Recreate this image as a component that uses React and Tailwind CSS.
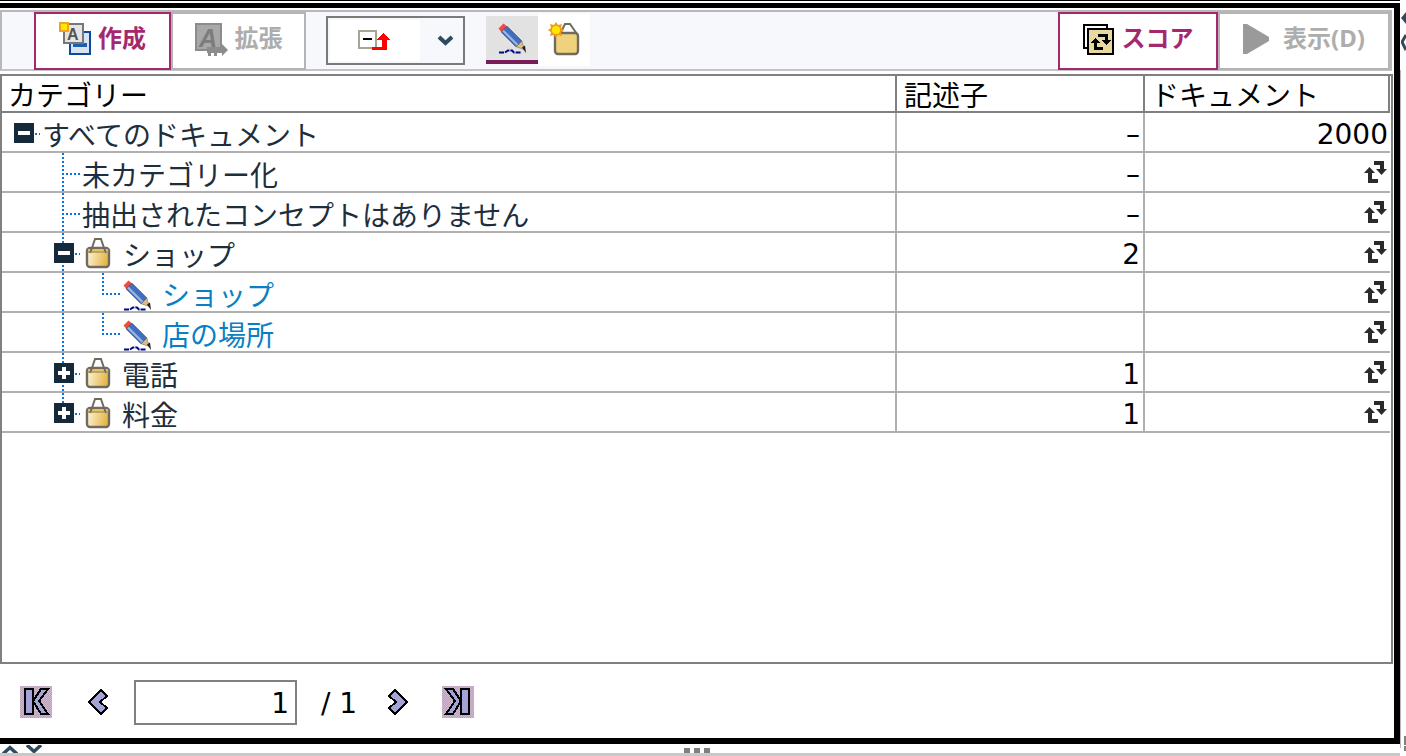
import React from "react";

const FONT = { fontFamily: '"DejaVu Sans","Noto Sans CJK JP",sans-serif' };

function Bag() {
  return (
    <svg width="26" height="32" viewBox="0 0 26 32" className="block">
      <defs>
        <linearGradient id="bagFill" x1="0" x2="1" y1="0" y2="0.2">
          <stop offset="0" stopColor="#fdf8e4" />
          <stop offset="1" stopColor="#e6b647" />
        </linearGradient>
      </defs>
      <rect x="2" y="11" width="22" height="19" rx="3" fill="url(#bagFill)" stroke="#6f6b60" strokeWidth="2.4" />
      <rect x="3" y="12" width="20" height="4" fill="#e9c25b" />
      <path d="M5 16 L7 11 L10 2 H16 L19 11 L21 16" fill="none" stroke="#6f6b60" strokeWidth="2" />
      <path d="M2 15 H24" stroke="#8a8570" strokeWidth="1" />
    </svg>
  );
}

function Pencil() {
  return (
    <svg width="30" height="32" viewBox="0 0 30 32" className="block">
      <path d="M4.2 9.8 L9.8 4.2 L24.8 19.2 L19.2 24.8 Z" fill="#3e6fc4" stroke="#27467f" strokeWidth="1" />
      <path d="M6 8.5 L20.5 23" stroke="#9fb7dd" strokeWidth="2.2" />
      <path d="M1.5 6.5 L6.5 1.5 L9.8 4.2 L4.2 9.8 Z" fill="#ef4a3c" />
      <path d="M19.2 24.8 L24.8 19.2 L27.5 27.5 Z" fill="#d9bd8d" stroke="#7d6d50" strokeWidth="0.6" />
      <path d="M25 25.5 L28 23.5 L29 31 Z" fill="#222" />
      <path d="M2 30.5 H8 L11 28.5 H15 L17 30.5 H24" stroke="#000a80" strokeWidth="2" fill="none" strokeDasharray="5 1" />
    </svg>
  );
}

function TreeBox({ plus }) {
  return (
    <span className="relative flex h-5 w-5 shrink-0 items-center justify-center bg-[#14293a]">
      <span className="h-1 w-3 bg-white" />
      {plus && <span className="absolute h-3 w-1 bg-white" />}
    </span>
  );
}

function Refresh() {
  return (
    <svg width="24" height="24" viewBox="0 0 24 24" fill="none" stroke="#2b2b2b" strokeWidth="4" className="block">
      <path d="M10 3 H18 V10" />
      <path d="M12 9 H23 L17.5 15 Z" fill="#2b2b2b" stroke="none" />
      <path d="M0 13 H11 L5.5 7 Z" fill="#2b2b2b" stroke="none" />
      <path d="M6 12 V21 H14" />
    </svg>
  );
}

const V = ({ x, h = "h-full" }) => (
  <span
    className={`absolute top-0 w-[2px] ${h} bg-[repeating-linear-gradient(to_bottom,#0b74e0_0_2px,transparent_2px_4px)]`}
    style={{ left: x }}
  />
);
const H = ({ x, w, y }) => (
  <span
    className="absolute h-[2px] bg-[repeating-linear-gradient(to_right,#0b74e0_0_2px,transparent_2px_4px)]"
    style={{ left: x, width: w, top: y }}
  />
);

const GRID = "grid h-10 w-[1388px] grid-cols-[893px_248px_247px] border-b-2 border-[#b0b0b0]";

function Row({ guides, indent, children, desc, doc, blue }) {
  return (
    <div className={GRID}>
      <div className={`relative flex items-center ${blue ? "text-[#0a7fc4]" : "text-[#1d2e3c]"}`} style={{ paddingLeft: indent }}>
        {guides}
        <span className="pt-[9px]">{children}</span>
      </div>
      <div className="flex items-center justify-end border-l-2 border-[#b0b0b0] pr-[3px] text-black">
        <span className="pt-[5px]">{desc}</span>
      </div>
      <div className="flex items-center justify-end border-l-2 border-[#b0b0b0] pr-[2px] text-black">
        {doc ? <span className="pt-[5px]">{doc}</span> : <Refresh />}
      </div>
    </div>
  );
}

function ToolButton({ active, label, icon, width, gap = "gap-[6px]" }) {
  return (
    <div
      className={`flex h-[58px] items-center justify-center ${gap} border-2 bg-white text-[24px] font-bold ${
        active ? "border-[#a5286e] text-[#a5286e]" : "border-[#b4b4b4] text-[#adadad]"
      } ${width}`}
      style={{ fontFamily: '"Noto Sans","Noto Sans CJK JP",sans-serif' }}
    >
      {icon}
      <span className="mb-[6px] leading-none">{label}</span>
    </div>
  );
}

function CreateIcon() {
  return (
    <svg width="33" height="34" viewBox="0 0 33 34" shapeRendering="crispEdges" className="mb-[4px] block">
      <rect x="11" y="10" width="20" height="22" fill="#d9e4f2" stroke="#0c4a9e" strokeWidth="2.4" />
      <rect x="14" y="21" width="14" height="4" fill="#1c5fb0" />
      <rect x="5" y="2" width="19" height="19" fill="#e4e4e4" stroke="#777" strokeWidth="2.4" />
      <text x="8" y="18" fontSize="16" fontWeight="700" fontFamily="Liberation Sans" fill="#555">A</text>
      <rect x="0" y="0" width="10" height="10" fill="#f6a11c" />
      <rect x="2" y="2" width="6" height="6" fill="#ffe800" />
    </svg>
  );
}
function ExtendIcon() {
  return (
    <svg width="33" height="33" viewBox="0 0 33 33" className="mb-[4px] block">
      <rect x="1" y="1" width="25" height="26" fill="#a8a8a8" stroke="#8c8c8c" strokeWidth="2" />
      <text x="4" y="24" fontSize="25" fontStyle="italic" fontWeight="700" fontFamily="Liberation Sans" fill="#7c7c7c">A</text>
      <rect x="12" y="24" width="17" height="6" fill="#8c8c8c" />
      <rect x="13" y="30" width="3" height="3" fill="#8c8c8c" />
      <rect x="19" y="30" width="3" height="3" fill="#8c8c8c" />
      <path d="M27 21 L33 27 L27 33 Z" fill="#8c8c8c" />
    </svg>
  );
}
function ScoreIcon() {
  return (
    <svg width="31" height="31" viewBox="0 0 31 31" shapeRendering="crispEdges" className="mb-[4px] block">
      <rect x="1" y="1" width="23" height="23" fill="#fff" stroke="#000" strokeWidth="2" />
      <rect x="5" y="5" width="25" height="25" fill="#e8d9a0" stroke="#000" strokeWidth="2" />
      <path d="M15 11 H23 V16 M12 19 V24 H20" stroke="#000" strokeWidth="3" fill="none" />
      <path d="M18 16 H28 L23 21 Z M7 19 H17 L12 14 Z" fill="#000" />
    </svg>
  );
}
function PlayIcon() {
  return (
    <svg width="26" height="30" viewBox="0 0 26 30" className="mb-[4px] block">
      <path d="M0 0 L4 0 L26 13 V17 L4 30 L0 30 Z" fill="#9a9a9a" />
    </svg>
  );
}

function NavIcon({ kind }) {
  const edge = kind === "first" || kind === "last";
  const flip = kind === "last" || kind === "next";
  const id = `dith-${kind}`;
  if (!edge) {
    return (
      <svg width="20" height="26" viewBox="0 0 20 26" shapeRendering="crispEdges" className="block">
        <g transform={flip ? "matrix(-1 0 0 1 20 0)" : undefined}>
          <path d="M13 1 L1 13 L13 25 L19 19 L12 13 L19 7 Z" fill="#a3a3d8" stroke="#000" strokeWidth="2" />
        </g>
      </svg>
    );
  }
  return (
    <svg width="32" height="32" viewBox="0 0 32 32" shapeRendering="crispEdges" className="block">
      <defs>
        <pattern id={id} width="2" height="2" patternUnits="userSpaceOnUse">
          <rect width="2" height="2" fill="#a8b0a0" />
          <rect width="1" height="1" fill="#d0b8d0" />
          <rect x="1" y="1" width="1" height="1" fill="#d0b8d0" />
        </pattern>
      </defs>
      <rect width="32" height="32" fill={`url(#${id})`} />
      <g transform={flip ? "matrix(-1 0 0 1 32 0)" : undefined}>
        <rect x="5" y="3" width="8" height="25" fill="#a3a3d8" stroke="#000" strokeWidth="2" />
        <path d="M21 3 L13 15 L21 28 H28 L19 15 L28 3 Z" fill="#a3a3d8" stroke="#000" strokeWidth="2" />
      </g>
    </svg>
  );
}

function Chevron({ up }) {
  return (
    <svg width="16" height="9" viewBox="0 0 16 9" className="block">
      <path d={up ? "M1 9 L8 2.5 L15 9" : "M1 0 L8 6.5 L15 0"} fill="none" stroke="#2f4a5e" strokeWidth="3.4" />
    </svg>
  );
}

const guideBox = (plus) => (
  <>
    <span className="absolute left-[52px] top-[10px]"><TreeBox plus={plus} /></span>
    <H x={73} w={5} y={20} />
    <span className="absolute left-[83px] top-[4px]"><Bag /></span>
  </>
);
const guideLeaf = (
  <>
    <V x={60} />
    <V x={100} h="h-[22px]" />
    <H x={100} w={18} y={20} />
    <span className="absolute left-[120px] top-[6px]"><Pencil /></span>
  </>
);

export default function App() {
  return (
    <div className="relative h-[756px] w-[1406px] overflow-hidden bg-white text-[28px] leading-none" style={FONT}>
      <div className="h-[1px] w-[1400px] bg-black" />
      <div className="h-[2px] w-[1400px] bg-white" />
      <div className="flex h-[741px] w-[1400px] flex-col border-y-[5px] border-r-[6px] border-b-[6px] border-black bg-white">
        <div className="mt-[2px] flex h-[61px] w-[1392px] items-start justify-between border-2 border-[#b8b8b8] border-b-[#c4c4c4] bg-[#f7f8fb] pl-[32px]">
          <div className="flex items-start">
            <ToolButton active label="作成" icon={<CreateIcon />} width="w-[137px]" />
            <ToolButton label="拡張" icon={<ExtendIcon />} width="w-[135px]" gap="gap-[7px]" />
            <div className="ml-[20px] mt-[4px] flex h-[49px] w-[139px] border-2 border-[#7a7a7a]">
              <div className="m-[2px] flex w-[90px] items-center justify-center bg-white">
                <svg width="34" height="22" viewBox="0 0 34 22" shapeRendering="crispEdges" className="block">
                  <rect x="1" y="1" width="17" height="17" fill="#fff" stroke="#a8a594" strokeWidth="2" />
                  <rect x="5" y="8" width="9" height="2" fill="#000" />
                  <path d="M19 10 L25.5 3 L32 10 H29 V20 H14 V17 H24 V10 Z" fill="#f00" />
                </svg>
              </div>
              <div className="flex flex-1 items-center justify-center pl-[6px]">
                <svg width="17" height="11" viewBox="0 0 17 11" className="block">
                  <path d="M2 2 L8.5 8 L15 2" fill="none" stroke="#2f4a5e" strokeWidth="4" />
                </svg>
              </div>
            </div>
            <div className="ml-[21px] mt-[4px] flex">
              <div className="flex h-[48px] w-[52px] items-center justify-center border-b-[4px] border-[#7a1c5a] bg-[#e2e2e2]">
                <Pencil />
              </div>
              <div className="-mt-[2px] flex h-[52px] w-[52px] items-start justify-center bg-white pt-[8px]">
                <svg width="32" height="34" viewBox="0 0 32 34" className="block">
                  <path d="M12 12 L17 2 H22 L29 12" fill="none" stroke="#6f6b60" strokeWidth="2" />
                  <rect x="7" y="11" width="23" height="21" rx="3" fill="#f1d27c" stroke="#6f6b60" strokeWidth="2.4" />
                  <path d="M8 0 L10 3 L14 2 L13 6 L16 8 L13 10 L14 14 L10 13 L8 16 L6 13 L2 14 L3 10 L0 8 L3 6 L2 2 L6 3 Z" fill="#f39a1d" />
                  <circle cx="8" cy="8" r="4" fill="#ffe800" />
                </svg>
              </div>
            </div>
          </div>
          <div className="flex items-start">
            <ToolButton active label="スコア" icon={<ScoreIcon />} width="w-[160px]" gap="gap-[8px]" />
            <ToolButton label="表示(D)" icon={<PlayIcon />} width="w-[172px]" gap="gap-[14px]" />
          </div>
        </div>

        <div className="mt-[3px] h-[590px] w-[1393px] border-2 border-[#808080] bg-white">
          <div className="grid h-[37px] w-[1388px] grid-cols-[893px_248px_247px] border-b-[2px] border-[#808080] text-black">
            <div className="pl-[6px] pt-[7px]">カテゴリー</div>
            <div className="border-l-2 border-[#808080] pl-[7px] pt-[7px]">記述子</div>
            <div className="border-x-2 border-[#808080] pl-[6px] pt-[7px]">ドキュメント</div>
          </div>

          <Row indent={40} desc="–" doc="2000" guides={<><span className="absolute left-[12px] top-[10px]"><TreeBox /></span><H x={33} w={5} y={20} /></>}>
            すべてのドキュメント
          </Row>
          <Row indent={80} desc="–" guides={<><V x={60} /><H x={60} w={18} y={20} /></>}>未カテゴリー化</Row>
          <Row indent={80} desc="–" guides={<><V x={60} /><H x={60} w={18} y={20} /></>}>抽出されたコンセプトはありません</Row>
          <Row indent={121} desc="2" guides={<><V x={60} />{guideBox(false)}</>}>ショップ</Row>
          <Row indent={160} blue guides={guideLeaf}>ショップ</Row>
          <Row indent={160} blue guides={guideLeaf}>店の場所</Row>
          <Row indent={120} desc="1" guides={<><V x={60} />{guideBox(true)}</>}>電話</Row>
          <Row indent={120} desc="1" guides={<><V x={60} h="h-[12px]" />{guideBox(true)}</>}>料金</Row>
        </div>

        <div className="flex flex-1 items-center pl-[20px] pt-[2px] text-black">
          <NavIcon kind="first" />
          <span className="ml-[36px]"><NavIcon kind="prev" /></span>
          <div className="ml-[26px] flex h-[45px] w-[163px] items-center justify-end border-2 border-[#808080] pr-[6px] pt-[3px]">1</div>
          <span className="ml-[24px] w-[60px] pt-[3px]">/ 1</span>
          <span className="ml-[7px]"><NavIcon kind="next" /></span>
          <span className="ml-[34px]"><NavIcon kind="last" /></span>
        </div>
      </div>

      <div className="absolute left-[1400px] top-[70px] h-[678px] w-[1px] bg-[#b8b8b8]" />
      <div className="absolute left-[1401px] top-[12px] flex flex-col gap-[10px]">
        <svg width="5" height="12" viewBox="0 0 5 12" className="block"><path d="M5 0 L0 6 L5 12 Z" fill="#2f4a5e" /></svg>
        <svg width="5" height="17" viewBox="0 0 5 17" className="block"><path d="M5 1 L1 8 L5 16" fill="none" stroke="#2f4a5e" strokeWidth="3" /></svg>
      </div>
      <div className="absolute left-[1404px] top-[736px] flex flex-col gap-[1px]">
        <span className="block h-[9px] w-[2px] bg-[#808080]" />
        <span className="block h-[5px] w-[2px] bg-[#808080]" />
      </div>
      <div className="relative h-[9px]">
        <div className="absolute left-[2px] top-[1px] flex gap-[8px]">
          <Chevron up />
          <Chevron />
        </div>
        <div className="absolute left-[684px] top-[4px] flex gap-[4px]">
          <span className="h-[5px] w-[6px] bg-[#808080]" />
          <span className="h-[5px] w-[6px] bg-[#808080]" />
          <span className="h-[5px] w-[6px] bg-[#808080]" />
        </div>
      </div>
      <div className="absolute bottom-0 left-0 h-[3px] w-[1400px] bg-[#c8c8c8]" />
    </div>
  );
}
